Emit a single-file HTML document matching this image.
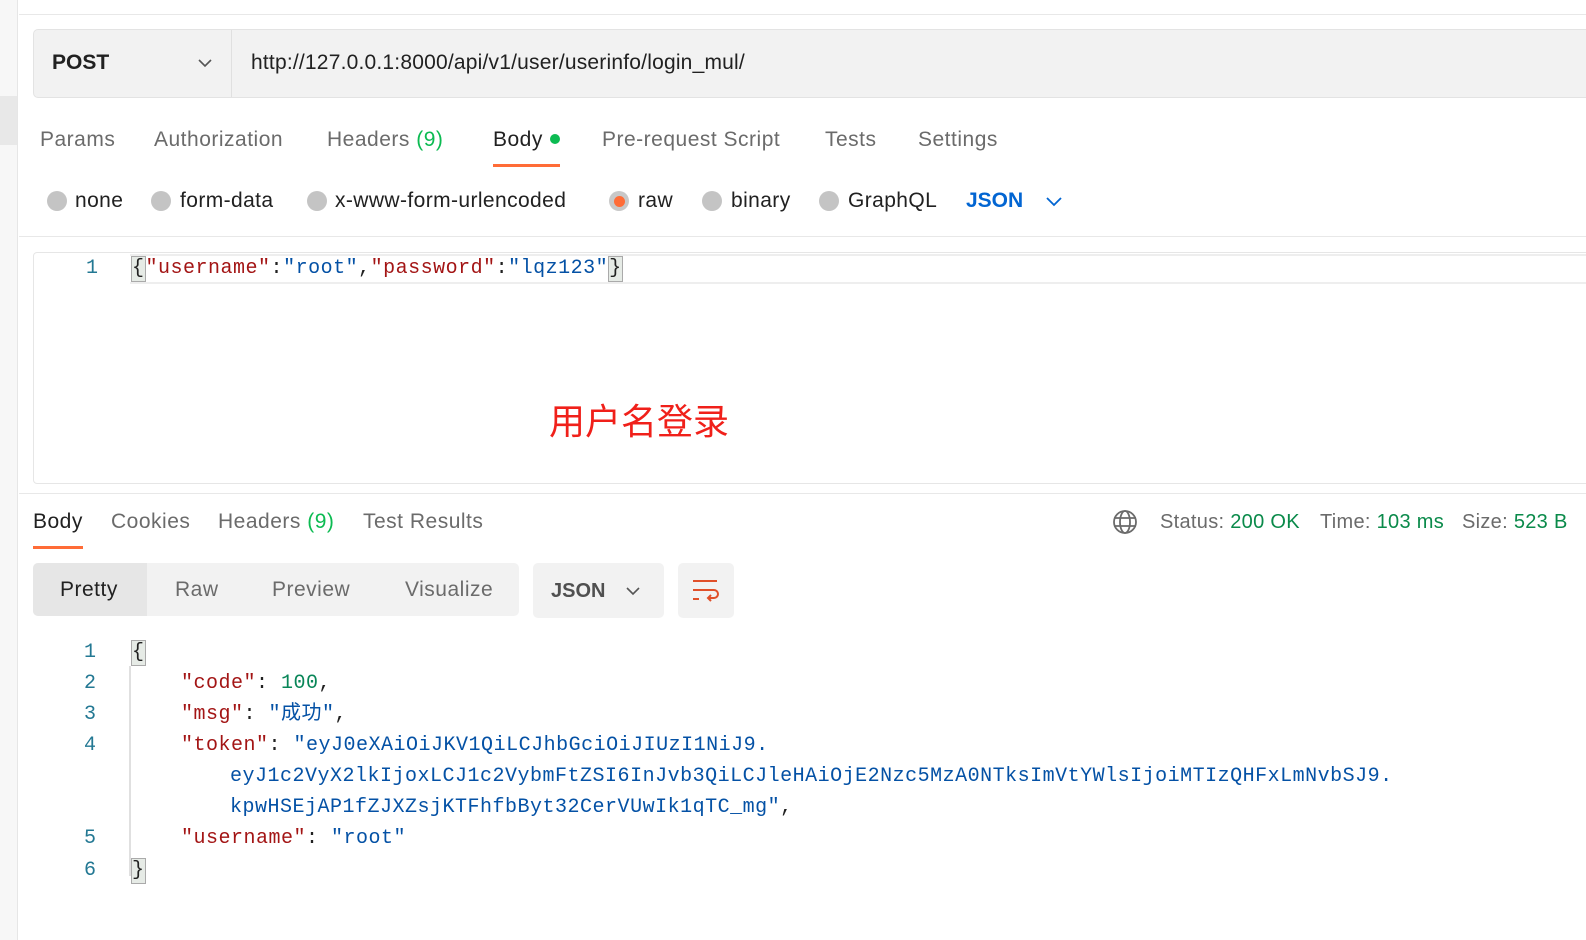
<!DOCTYPE html>
<html><head><meta charset="utf-8"><style>
*{margin:0;padding:0;box-sizing:border-box}
body{width:1586px;height:940px;background:#fff;font-family:"Liberation Sans","Noto Sans CJK SC",sans-serif;position:relative;overflow:hidden;color:#212121}
.a{position:absolute;line-height:26px;white-space:nowrap}
.mono{font-family:"Liberation Mono","Noto Sans CJK SC",monospace;font-size:20px;letter-spacing:0.5px;white-space:pre;line-height:26px}
.k{color:#a31515}.s{color:#0451a5}.n{color:#098658}
.ln{color:#237893;font-family:"Liberation Mono",monospace;font-size:20px;width:30px;text-align:right}
.tab{font-size:21px;letter-spacing:0.5px;color:#6b6b6b;top:127px}
.rad{width:20px;height:20px;border-radius:50%;background:#c4c4c4;top:191px}
.rl{font-size:21px;letter-spacing:0.4px;color:#212121;top:188px}
.br{background:#e6ebe6;border:1px solid #aaa;display:inline-block;line-height:24px}
.t2{font-size:21px;letter-spacing:0.5px;color:#6b6b6b;top:509px}
.t3{font-size:21px;letter-spacing:0.5px;color:#6b6b6b;top:577px}
</style></head><body>
<div class="a" style="left:0;top:0;width:18px;height:940px;background:#f7f7f7;border-right:1px solid #e6e6e6"></div>
<div class="a" style="left:0;top:96px;width:17px;height:49px;background:#e8e8e8"></div>
<div class="a" style="left:19px;top:14px;width:1567px;height:1px;background:#e8e8e8"></div>
<div class="a" style="left:33px;top:29px;width:1560px;height:69px;background:#f2f2f2;border:1px solid #e3e3e3;border-radius:5px"></div>
<div class="a" style="left:231px;top:30px;width:1px;height:67px;background:#e0e0e0"></div>
<div class="a" style="left:52px;top:50px;font-size:21px;font-weight:bold;color:#212121">POST</div>
<svg class="a" style="left:197px;top:57px" width="16" height="12"><path d="M2 3l6 6 6-6" stroke="#555" stroke-width="1.6" fill="none"/></svg>
<div class="a" style="left:251px;top:50px;font-size:21px;letter-spacing:0.2px;color:#212121">http://127.0.0.1:8000/api/v1/user/userinfo/login_mul/</div>

<div class="a tab" style="left:40px">Params</div>
<div class="a tab" style="left:154px">Authorization</div>
<div class="a tab" style="left:327px">Headers <span style="color:#0cbb52">(9)</span></div>
<div class="a tab" style="left:493px;color:#212121">Body</div>
<div class="a" style="left:550px;top:134px;width:10px;height:10px;border-radius:50%;background:#0cbb52"></div>
<div class="a" style="left:493px;top:164px;width:67px;height:3px;background:#ff6c37"></div>
<div class="a tab" style="left:602px">Pre-request Script</div>
<div class="a tab" style="left:825px">Tests</div>
<div class="a tab" style="left:918px">Settings</div>

<div class="a rad" style="left:47px"></div><div class="a rl" style="left:75px">none</div>
<div class="a rad" style="left:151px"></div><div class="a rl" style="left:180px">form-data</div>
<div class="a rad" style="left:307px"></div><div class="a rl" style="left:335px">x-www-form-urlencoded</div>
<div class="a rad" style="left:609px;background:#c8c8c8"></div><div class="a" style="left:614px;top:196px;width:11px;height:11px;border-radius:50%;background:#ff6c37"></div><div class="a rl" style="left:638px">raw</div>
<div class="a rad" style="left:702px"></div><div class="a rl" style="left:731px">binary</div>
<div class="a rad" style="left:819px"></div><div class="a rl" style="left:848px">GraphQL</div>
<div class="a" style="left:966px;top:188px;font-size:21px;font-weight:bold;color:#0265d2">JSON</div>
<svg class="a" style="left:1045px;top:195px" width="18" height="12"><path d="M2 3l7 7 7-7" stroke="#0265d2" stroke-width="1.8" fill="none"/></svg>

<div class="a" style="left:19px;top:236px;width:1567px;height:1px;background:#e8e8e8"></div>
<div class="a" style="left:33px;top:252px;width:1560px;height:232px;border:1px solid #e6e6e6;border-radius:4px"></div>
<div class="a" style="left:130px;top:254px;width:1460px;height:30px;border:2px solid #eee;border-left:none"></div>
<div class="a ln" style="left:68px;top:256px">1</div>
<div class="a mono" style="left:131px;top:256px"><span class="br">{</span><span class="k">"username"</span>:<span class="s">"root"</span>,<span class="k">"password"</span>:<span class="s">"lqz123"</span><span class="br">}</span></div>
<div class="a" style="left:549px;top:396px;font-size:36px;line-height:46px;color:#f0201a;font-family:'Noto Sans CJK SC',sans-serif">用户名登录</div>

<div class="a" style="left:19px;top:493px;width:1567px;height:1px;background:#e8e8e8"></div>
<div class="a t2" style="left:33px;color:#212121">Body</div>
<div class="a" style="left:33px;top:546px;width:50px;height:3px;background:#ff6c37"></div>
<div class="a t2" style="left:111px">Cookies</div>
<div class="a t2" style="left:218px">Headers <span style="color:#0cbb52">(9)</span></div>
<div class="a t2" style="left:363px">Test Results</div>
<svg class="a" style="left:1112px;top:509px" width="26" height="26" viewBox="0 0 26 26" fill="none" stroke="#6b6b6b" stroke-width="1.8"><circle cx="13" cy="13" r="11"/><ellipse cx="13" cy="13" rx="5" ry="11"/><path d="M2 9h22M2 17h22"/></svg>
<div class="a" style="left:1160px;top:509px;font-size:20px;letter-spacing:0.3px;color:#6b6b6b">Status: <span style="color:#0a8a4a">200 OK</span></div>
<div class="a" style="left:1320px;top:509px;font-size:20px;letter-spacing:0.3px;color:#6b6b6b">Time: <span style="color:#0a8a4a">103 ms</span></div>
<div class="a" style="left:1462px;top:509px;font-size:20px;letter-spacing:0.3px;color:#6b6b6b">Size: <span style="color:#0a8a4a">523 B</span></div>

<div class="a" style="left:33px;top:563px;width:486px;height:53px;background:#f2f2f2;border-radius:5px"></div>
<div class="a" style="left:33px;top:563px;width:114px;height:53px;background:#e6e6e6;border-radius:5px 0 0 5px"></div>
<div class="a t3" style="left:60px;color:#212121">Pretty</div>
<div class="a t3" style="left:175px">Raw</div>
<div class="a t3" style="left:272px">Preview</div>
<div class="a t3" style="left:405px">Visualize</div>
<div class="a" style="left:533px;top:563px;width:131px;height:55px;background:#f2f2f2;border-radius:5px"></div>
<div class="a" style="left:551px;top:578px;font-size:20px;font-weight:bold;color:#505050">JSON</div>
<svg class="a" style="left:625px;top:585px" width="16" height="12"><path d="M2 3l6 6 6-6" stroke="#555" stroke-width="1.6" fill="none"/></svg>
<div class="a" style="left:678px;top:563px;width:56px;height:55px;background:#f2f2f2;border-radius:5px"></div>
<svg class="a" style="left:690px;top:576px" width="32" height="30" viewBox="0 0 32 30" fill="none" stroke="#e0502a" stroke-width="2"><path d="M3 5h24M3 14h21a4 4 0 0 1 0 8h-6M21 19l-3 3 3 3M3 23h6"/></svg>

<div class="a" style="left:129px;top:666px;width:2px;height:210px;background:#e0e0e0"></div>
<div class="a ln" style="left:66px;top:640px">1</div>
<div class="a ln" style="left:66px;top:671px">2</div>
<div class="a ln" style="left:66px;top:702px">3</div>
<div class="a ln" style="left:66px;top:733px">4</div>
<div class="a ln" style="left:66px;top:826px">5</div>
<div class="a ln" style="left:66px;top:858px">6</div>
<div class="a mono" style="left:131px;top:640px"><span class="br">{</span></div>
<div class="a mono" style="left:181px;top:671px"><span class="k">"code"</span>: <span class="n">100</span>,</div>
<div class="a mono" style="left:181px;top:702px"><span class="k">"msg"</span>: <span class="s">"成功"</span>,</div>
<div class="a mono" style="left:181px;top:733px"><span class="k">"token"</span>: <span class="s">"eyJ0eXAiOiJKV1QiLCJhbGciOiJIUzI1NiJ9.</span></div>
<div class="a mono s" style="left:230px;top:764px">eyJ1c2VyX2lkIjoxLCJ1c2VybmFtZSI6InJvb3QiLCJleHAiOjE2Nzc5MzA0NTksImVtYWlsIjoiMTIzQHFxLmNvbSJ9.</div>
<div class="a mono" style="left:230px;top:795px"><span class="s">kpwHSEjAP1fZJXZsjKTFhfbByt32CerVUwIk1qTC_mg"</span>,</div>
<div class="a mono" style="left:181px;top:826px"><span class="k">"username"</span>: <span class="s">"root"</span></div>
<div class="a mono" style="left:131px;top:858px"><span class="br">}</span></div>
</body></html>
